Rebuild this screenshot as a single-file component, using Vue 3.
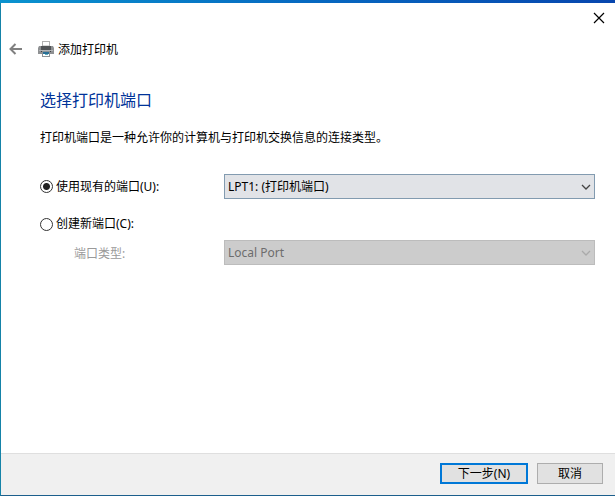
<script setup>
import { ref } from 'vue'

const mode = ref('existing')
const port = ref('lpt1')
const portType = ref('local')
</script>

<template>
  <div class="window">
    <div class="accent"></div>
    <div class="title-bar">
      <button class="icon-button" type="button" aria-label="关闭">
        <svg width="12" height="12" viewBox="0 0 12 12">
          <path d="M1 1L11 11M11 1L1 11" fill="none" stroke="#000" stroke-width="1.2" />
        </svg>
      </button>
    </div>

    <header class="wizard-header">
      <button class="icon-button" type="button" aria-label="返回">
        <svg width="14" height="12" viewBox="0 0 14 12">
          <path d="M13 6H2M6.5 1L1.5 6L6.5 11" fill="none" stroke="#808080" stroke-width="2" />
        </svg>
      </button>
      <svg class="printer" width="16" height="16" viewBox="0 0 16 16">
        <rect x="4.5" y="0.5" width="7" height="6" fill="#fff" stroke="#b0b0b0" />
        <path d="M1 5H15L16 7V13H0V7Z" fill="#8f9193" />
        <rect x="3" y="5" width="10" height="4" fill="#505356" />
        <rect x="5" y="4" width="6" height="1" fill="#d8d8d8" />
        <rect x="1" y="9" width="14" height="1" fill="#b4b6b8" />
        <rect x="3" y="10" width="10" height="1" fill="#3c3f42" />
        <rect x="4.5" y="10.5" width="7" height="5" fill="#fff" stroke="#8c9295" />
        <rect x="5" y="11" width="6" height="2" fill="#2b6f96" />
        <rect x="7" y="13" width="3" height="1" fill="#61b1c1" />
      </svg>
      <span class="wizard-title">添加打印机</span>
    </header>

    <main class="content">
      <h1>选择打印机端口</h1>
      <p>打印机端口是一种允许你的计算机与打印机交换信息的连接类型。</p>

      <form class="options">
        <label class="radio" for="mode-existing">
          <input id="mode-existing" v-model="mode" type="radio" name="mode" value="existing" />
          使用现有的端口(U):
        </label>
        <div class="select-box">
          <select v-model="port" aria-label="使用现有的端口">
            <option value="lpt1">LPT1: (打印机端口)</option>
          </select>
          <svg class="chevron" width="10" height="6" viewBox="0 0 10 6">
            <path d="M1 1L5 5L9 1" fill="none" stroke="currentColor" stroke-width="1.3" />
          </svg>
        </div>

        <label class="radio new-port" for="mode-new">
          <input id="mode-new" v-model="mode" type="radio" name="mode" value="new" />
          创建新端口(C):
        </label>

        <label class="type-label" :class="{ disabled: mode !== 'new' }" for="port-type">端口类型:</label>
        <div class="select-box" :class="{ disabled: mode !== 'new' }">
          <select id="port-type" v-model="portType" :disabled="mode !== 'new'">
            <option value="local">Local Port</option>
          </select>
          <svg class="chevron" width="10" height="6" viewBox="0 0 10 6">
            <path d="M1 1L5 5L9 1" fill="none" stroke="currentColor" stroke-width="1.3" />
          </svg>
        </div>
      </form>
    </main>

    <footer class="actions">
      <button class="action primary" type="button">下一步(N)</button>
      <button class="action" type="button">取消</button>
    </footer>
  </div>
</template>

<style>
body {
  margin: 0;
}
</style>

<style scoped>
.window {
  box-sizing: border-box;
  display: flex;
  flex-direction: column;
  min-height: 100vh;
  border-left: 1px solid #1583a8;
  border-bottom: 1px solid #1c5f8c;
  background: #fff;
  color: #000;
  font-family: "Noto Sans", "Noto Sans CJK SC", sans-serif;
  font-size: 12px;
  line-height: 16px;
}

.accent {
  height: 3px;
  margin-left: -1px;
  background: linear-gradient(to right, #0a93cf, #0669c1 50%, #0746ae);
}

.title-bar {
  display: flex;
  justify-content: flex-end;
  padding: 9px 10px 0;
}

.icon-button {
  display: flex;
  padding: 0;
  border: 0;
  background: none;
}

.wizard-header {
  display: flex;
  align-items: center;
  margin-top: 16px;
  padding-left: 8px;
}

.wizard-title {
  padding-top: 2px;
}

.printer {
  margin: 0 4px 0 15px;
}

.content {
  flex: 1;
  padding: 30px 20px 0 39px;
}

h1 {
  margin: 0;
  color: #003399;
  font-size: 16px;
  font-weight: 400;
  line-height: 24px;
}

p {
  margin: 18px 0 0;
}

.options {
  display: grid;
  grid-template-columns: 184px 1fr;
  align-items: center;
  margin-top: 28px;
}

.radio {
  display: flex;
  align-items: center;
  gap: 3px;
}

.radio input {
  appearance: none;
  box-sizing: border-box;
  width: 13px;
  height: 13px;
  margin: 0;
  border: 1px solid #333;
  border-radius: 50%;
  background: #fff;
}

.radio input:checked {
  background: radial-gradient(circle, #222 3px, #fff 4px);
}

.new-port {
  grid-column: 1 / 3;
  margin: 17px 0 8px;
}

.type-label {
  padding: 3px 0 0 34px;
}

.type-label.disabled {
  color: #9a9a9a;
}

.select-box {
  position: relative;
  color: #444;
}

.select-box.disabled {
  color: #aaa;
}

select {
  appearance: none;
  box-sizing: border-box;
  display: block;
  width: 100%;
  height: 25px;
  padding: 0 20px 0 3px;
  border: 1px solid #829bb0;
  border-radius: 0;
  background: #e1e3e7;
  color: #000;
  font: inherit;
}

select:disabled {
  border-color: #bcbcbc;
  background: #ccc;
  color: #6d6d6d;
  opacity: 1;
}

.chevron {
  position: absolute;
  top: 10px;
  right: 4px;
  pointer-events: none;
}

.actions {
  display: flex;
  justify-content: flex-end;
  gap: 9px;
  padding: 9px 12px 11px;
  border-top: 1px solid #dfdfdf;
  background: #f0f0f0;
}

.action {
  box-sizing: border-box;
  width: 66px;
  height: 21px;
  padding: 0;
  border: 1px solid #adadad;
  background: #e1e1e1;
  color: #000;
  font: inherit;
}

.action.primary {
  width: 88px;
  border: 2px solid #0078d7;
}
</style>
